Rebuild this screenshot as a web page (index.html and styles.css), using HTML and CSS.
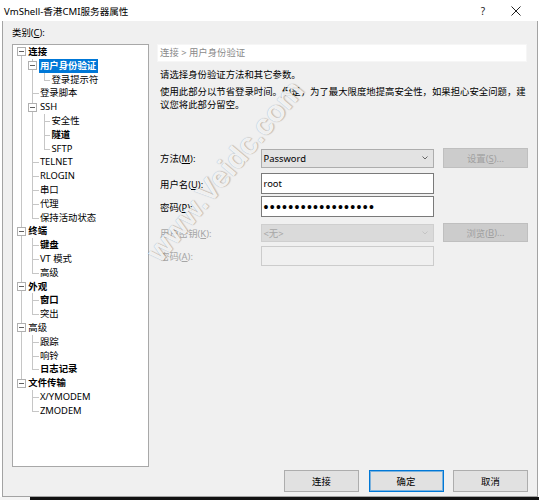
FILE: index.html
```html
<!DOCTYPE html>
<html lang="zh-CN">
<head>
<meta charset="utf-8">
<title>VmShell-香港CMI服务器属性</title>
<link rel="stylesheet" href="styles.css">
</head>
<body>
<div class="screen">
  <header class="titlebar">
    <span class="title">VmShell-香港CMI服务器属性</span>
    <span class="help">?</span>
    <span class="close"><svg width="10" height="10" viewBox="0 0 10 10"><path d="M0.5 0.5L9.5 9.5M9.5 0.5L0.5 9.5" stroke="#222" stroke-width="1" fill="none"/></svg></span>
  </header>
  <div class="dialog">
    <div class="main">
      <div class="left">
        <div class="cat-label">类别(<u>C</u>):</div>
        <div class="tree">
          <div class="row"><span class="c xb"><i class="box"></i></span><span class="lbl b">连接</span></div>
          <div class="row"><span class="c v"></span><span class="c xf"><i class="box"></i></span><span class="lbl b sel">用户身份验证</span></div>
          <div class="row"><span class="c v"></span><span class="c v"></span><span class="c l"></span><span class="lbl">登录提示符</span></div>
          <div class="row"><span class="c v"></span><span class="c t"></span><span class="lbl">登录脚本</span></div>
          <div class="row"><span class="c v"></span><span class="c xf"><i class="box"></i></span><span class="lbl">SSH</span></div>
          <div class="row"><span class="c v"></span><span class="c v"></span><span class="c t"></span><span class="lbl">安全性</span></div>
          <div class="row"><span class="c v"></span><span class="c v"></span><span class="c t"></span><span class="lbl b">隧道</span></div>
          <div class="row"><span class="c v"></span><span class="c v"></span><span class="c l"></span><span class="lbl">SFTP</span></div>
          <div class="row"><span class="c v"></span><span class="c t"></span><span class="lbl">TELNET</span></div>
          <div class="row"><span class="c v"></span><span class="c t"></span><span class="lbl">RLOGIN</span></div>
          <div class="row"><span class="c v"></span><span class="c t"></span><span class="lbl">串口</span></div>
          <div class="row"><span class="c v"></span><span class="c t"></span><span class="lbl">代理</span></div>
          <div class="row"><span class="c v"></span><span class="c l"></span><span class="lbl">保持活动状态</span></div>
          <div class="row"><span class="c xf"><i class="box"></i></span><span class="lbl b">终端</span></div>
          <div class="row"><span class="c v"></span><span class="c t"></span><span class="lbl b">键盘</span></div>
          <div class="row"><span class="c v"></span><span class="c t"></span><span class="lbl">VT 模式</span></div>
          <div class="row"><span class="c v"></span><span class="c l"></span><span class="lbl">高级</span></div>
          <div class="row"><span class="c xf"><i class="box"></i></span><span class="lbl b">外观</span></div>
          <div class="row"><span class="c v"></span><span class="c t"></span><span class="lbl b">窗口</span></div>
          <div class="row"><span class="c v"></span><span class="c l"></span><span class="lbl">突出</span></div>
          <div class="row"><span class="c xf"><i class="box"></i></span><span class="lbl">高级</span></div>
          <div class="row"><span class="c v"></span><span class="c t"></span><span class="lbl">跟踪</span></div>
          <div class="row"><span class="c v"></span><span class="c t"></span><span class="lbl">响铃</span></div>
          <div class="row"><span class="c v"></span><span class="c l"></span><span class="lbl b">日志记录</span></div>
          <div class="row"><span class="c xt"><i class="box"></i></span><span class="lbl b">文件传输</span></div>
          <div class="row"><span class="c"></span><span class="c t"></span><span class="lbl">X/YMODEM</span></div>
          <div class="row"><span class="c"></span><span class="c l"></span><span class="lbl">ZMODEM</span></div>
        </div>
      </div>
      <div class="right">
        <div class="crumb">连接 &gt; 用户身份验证</div>
        <p class="desc">请选择身份验证方法和其它参数。</p>
        <p class="desc2">使用此部分以节省登录时间。但是，为了最大限度地提高安全性，如果担心安全问题，建<br>议您将此部分留空。</p>
        <div class="form">
          <div class="frow r1">
            <span class="flabel">方法(<u>M</u>):</span>
            <div class="combo"><span class="val">Password</span><svg class="chev" width="6" height="4" viewBox="0 0 6 4"><path d="M0.5 0.5L3 3L5.5 0.5" stroke="#666" fill="none"/></svg></div>
            <span class="btn dis">设置(<u>S</u>)...</span>
          </div>
          <div class="frow r2">
            <span class="flabel">用户名(<u>U</u>):</span>
            <div class="input"><span class="val">root</span></div>
          </div>
          <div class="frow r3">
            <span class="flabel">密码(<u>P</u>):</span>
            <div class="input"><span class="dots">••••••••••••••••••</span></div>
          </div>
          <div class="frow r4">
            <span class="flabel dim">用户密钥(<u>K</u>):</span>
            <div class="combo dis"><span class="val">&lt;无&gt;</span><svg class="chev" width="6" height="4" viewBox="0 0 6 4"><path d="M0.5 0.5L3 3L5.5 0.5" stroke="#c4c4c4" fill="none"/></svg></div>
            <span class="btn dis">浏览(<u>B</u>)...</span>
          </div>
          <div class="frow r5">
            <span class="flabel dim">密码(<u>A</u>):</span>
            <div class="input dis"></div>
          </div>
        </div>
      </div>
    </div>
    <div class="footer">
      <span class="btn big">连接</span>
      <span class="btn big def">确定</span>
      <span class="btn big">取消</span>
    </div>
  </div>
  <div class="under"></div>
  <div class="watermark">www.Veidc.com</div>
</div>
</body>
</html>
```
FILE: styles.css
```css
* { box-sizing: border-box; }
html, body { margin: 0; padding: 0; }
body {
  background: #fff;
  font-family: "Noto Sans", "Noto Sans CJK SC", sans-serif;
  font-size: 9.4px;
  color: #000;
}
.screen {
  position: relative;
  width: 539px;
  height: 500px;
  display: flex;
  flex-direction: column;
  overflow: hidden;
}
.titlebar {
  height: 21px;
  flex: none;
  display: flex;
  align-items: center;
  padding-left: 4px;
  background: #fff;
}
.title { flex: 1; font-size: 9.6px; }
.help { width: 10px; text-align: center; margin-right: 23px; font-size: 10px; color: #222; }
.close { width: 10px; height: 10px; margin-right: 18px; display: flex; }

.dialog {
  height: 476px;
  flex: none;
  margin: 0 1px 0 2px;
  background: #f0f0f0;
  border: 1px solid #a3a3a3;
  border-top: none;
  display: flex;
  flex-direction: column;
}
.under {
  height: 3px;
  flex: none;
  background: linear-gradient(to right, #f4f4f4 30px, #121212 30px);
}

.main { display: flex; padding-left: 9px; height: 446px; }
.left { width: 137px; display: flex; flex-direction: column; }
.cat-label { height: 12px; line-height: 12px; margin-top: 6px; margin-bottom: 5px; }
.tree {
  height: 423px;
  border: 1px solid #a8a8a8;
  background: #fff;
  padding-left: 2.5px;
  --ln: #c6c6c6;
}
.row { display: flex; height: 13.8px; }
.c { width: 11.6px; flex: none; display: flex; align-items: center; justify-content: center; }
.v { background: linear-gradient(var(--ln), var(--ln)) 5px 0 / 1px 100% no-repeat; }
.t {
  background:
    linear-gradient(var(--ln), var(--ln)) 5px 0 / 1px 100% no-repeat,
    linear-gradient(var(--ln), var(--ln)) 5px 7px / 100% 1px no-repeat;
}
.l {
  background:
    linear-gradient(var(--ln), var(--ln)) 5px 0 / 1px 7px no-repeat,
    linear-gradient(var(--ln), var(--ln)) 5px 7px / 100% 1px no-repeat;
}
.xf { background: linear-gradient(var(--ln), var(--ln)) 5px 0 / 1px 100% no-repeat; }
.xb { background: linear-gradient(var(--ln), var(--ln)) 5px 7px / 1px 100% no-repeat; }
.xt { background: linear-gradient(var(--ln), var(--ln)) 5px 0 / 1px 7px no-repeat; }
.box {
  width: 9px;
  height: 9px;
  border: 1px solid #b0b0b0;
  background: linear-gradient(#606060, #606060) center / 5px 1px no-repeat, #fff;
}
.lbl { line-height: 13.8px; padding: 0 2px 0 1.2px; white-space: nowrap; }
.b { font-weight: bold; }
.sel { background: #0078d7; color: #fff; }

.right { margin-left: 8px; width: 371px; padding-top: 23px; }
.crumb {
  width: 370px;
  height: 18px;
  background: #fff;
  border: 1px solid #f6f6f6;
  color: #8a8a8a;
  padding-left: 2px;
  line-height: 16px;
}
.desc { margin: 6px 0 0 3px; line-height: 13px; white-space: nowrap; }
.desc2 { margin: 4px 0 0 3px; line-height: 13px; white-space: nowrap; }

.form { margin-top: 37px; padding-left: 3px; }
.frow { display: flex; align-items: center; }
.r1 { height: 20px; }
.r2 { height: 21px; margin-top: 5px; }
.r3 { height: 21px; margin-top: 2px; }
.r4 { height: 19px; margin-top: 6px; }
.r5 { height: 20px; margin-top: 4px; }
.flabel { width: 101px; flex: none; white-space: nowrap; }
.dim { color: #a6a6a6; }
.combo {
  width: 173px;
  height: 19px;
  flex: none;
  display: flex;
  align-items: center;
  justify-content: space-between;
  padding: 0 5px 0 1.5px;
  background: #e3e3e3;
  border: 1px solid #adadad;
}
.r4 .combo { height: 18px; }
.combo.dis { background: #dadada; border-color: #cfcfcf; color: #a6a6a6; }
.input {
  width: 173px;
  height: 100%;
  flex: none;
  display: flex;
  align-items: center;
  padding-left: 1.5px;
  background: #fff;
  border: 1px solid #7a7a7a;
}
.input.dis { background: #f0f0f0; border-color: #cccccc; }
.dots {
  font-family: "Liberation Sans", sans-serif;
  font-size: 14px;
  letter-spacing: 1.3px;
  line-height: 14px;
}
.btn {
  display: flex;
  align-items: center;
  justify-content: center;
  flex: none;
  border: 1px solid #adadad;
  background: #e1e1e1;
  white-space: nowrap;
}
.frow .btn { width: 85px; height: 20px; margin-left: 9px; }
.r4 .btn { height: 19px; }
.btn.dis { background: #cccccc; border-color: #bfbfbf; color: #a0a0a0; }

.footer {
  display: flex;
  justify-content: flex-end;
  gap: 9.5px;
  margin-top: 3px;
  padding-right: 9px;
}
.btn.big { width: 75px; height: 22px; }
.btn.def { border-color: #0078d7; box-shadow: inset 0 0 0 1px rgba(0, 120, 215, 0.45); }

.watermark {
  position: absolute;
  left: 110px;
  top: 154px;
  width: 230px;
  text-align: center;
  font-family: "Liberation Sans", sans-serif;
  font-size: 30px;
  font-weight: bold;
  color: rgba(255, 255, 255, 0.9);
  text-shadow: 0 0 1px rgba(0, 0, 0, 0.35), 1px 1px 1px rgba(0, 0, 0, 0.15);
  transform: rotate(-50deg);
  pointer-events: none;
}
```
